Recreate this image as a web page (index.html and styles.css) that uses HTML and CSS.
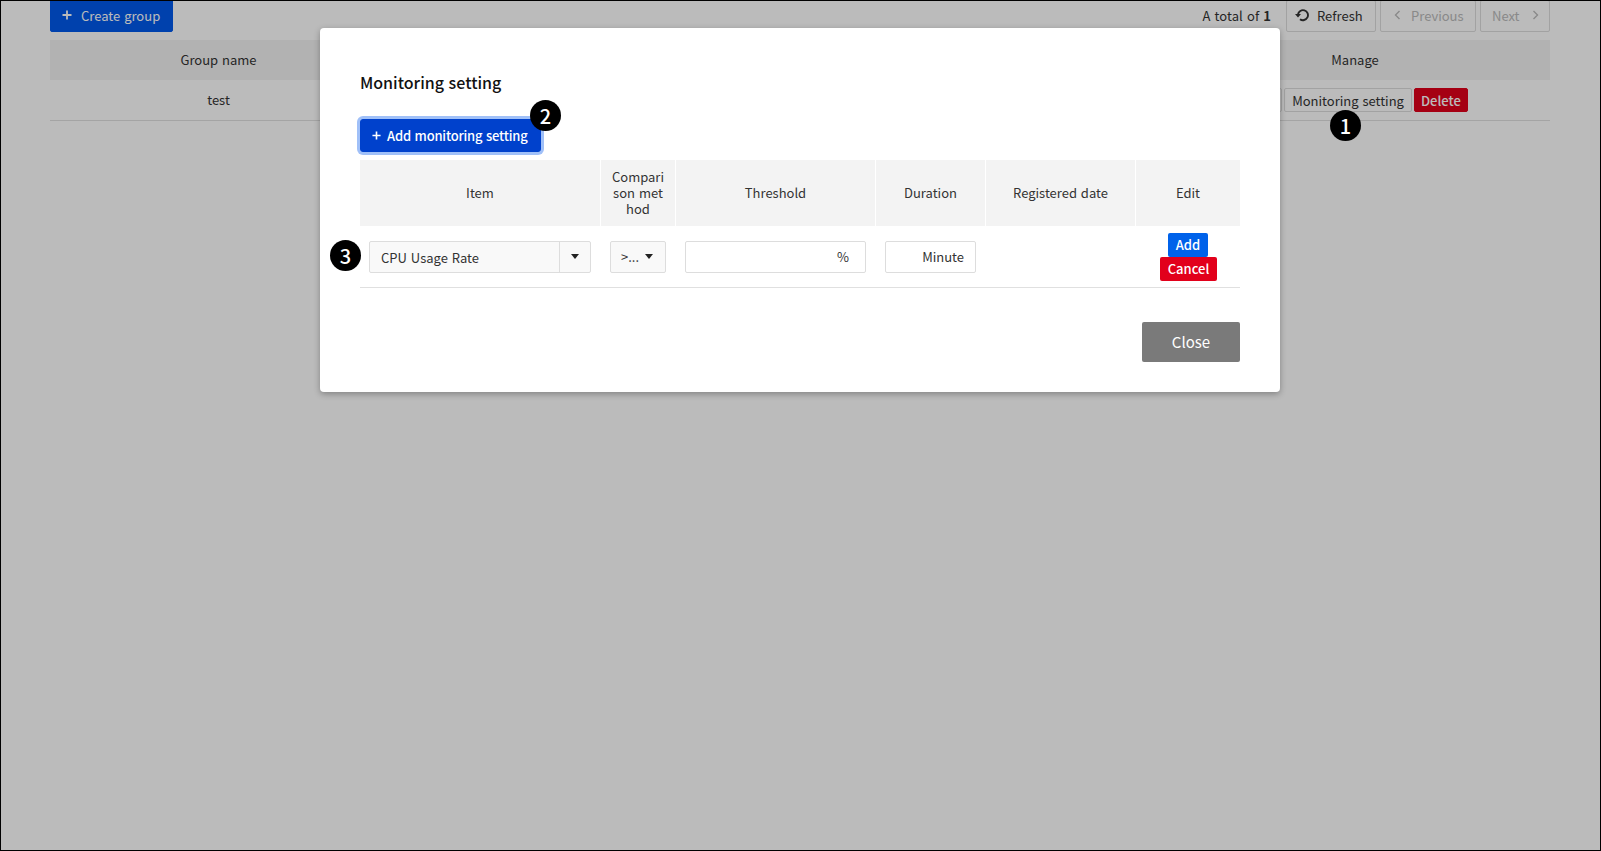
FILE: index.html

```html
<!DOCTYPE html>
<html lang="en">
<head>
  <meta charset="UTF-8" />
  <title>Monitoring setting</title>
  <link rel="stylesheet" href="styles.css">
</head>
<body>
  <div class="page">
    <div class="toolbar">
      <button class="btn btn-primary btn-create">
        <svg class="icon-plus" width="10" height="10" viewBox="0 0 10 10"><path d="M5 0.5v9M0.5 5h9" /></svg>
        <span>Create group</span>
      </button>
      <div class="toolbar-right">
        <span class="total">A total of <b>1</b></span>
        <button class="btn btn-refresh">
          <svg width="14" height="14" viewBox="0 0 14 14" fill="none" stroke="#333" stroke-width="1.9"><path d="M3 6.5A5 5 0 1 1 5 11.2" /><path d="M0 6h6l-3 3.6z" fill="#333" stroke="none" /></svg>
          <span>Refresh</span>
        </button>
        <button class="btn btn-disabled btn-prev">
          <svg width="7" height="10" viewBox="0 0 7 10" fill="none" stroke="#bbb" stroke-width="1.4"><path d="M5.5 1L1.5 5l4 4" /></svg>
          <span>Previous</span>
        </button>
        <button class="btn btn-disabled btn-next">
          <span>Next</span>
          <svg width="7" height="10" viewBox="0 0 7 10" fill="none" stroke="#bbb" stroke-width="1.4"><path d="M1.5 1l4 4-4 4" /></svg>
        </button>
      </div>
    </div>

    <div class="list-head">
      <div class="col-name">Group name</div>
      <div class="col-manage">Manage</div>
    </div>
    <div class="list-row">
      <div class="col-name">test</div>
      <div class="col-manage manage-btns">
        <button class="btn-small">Edit</button>
        <button class="btn-small">Monitoring setting</button>
        <button class="btn-small btn-delete">Delete</button>
      </div>
    </div>
  </div>

  <div class="overlay"></div>
  <span class="badge badge-1">1</span>

  <div class="modal">
    <h2>Monitoring setting</h2>
    <button class="btn btn-primary btn-add">
      <svg class="icon-plus" width="9" height="9" viewBox="0 0 10 10"><path d="M5 0.5v9M0.5 5h9" /></svg>
      <span>Add monitoring setting</span>
    </button>
    <span class="badge badge-2">2</span>
    <span class="badge badge-3">3</span>

    <div class="grid-head">
      <div>Item</div>
      <div>Compari<br>son met<br>hod</div>
      <div>Threshold</div>
      <div>Duration</div>
      <div>Registered date</div>
      <div>Edit</div>
    </div>
    <div class="grid-row">
      <div class="cell">
        <div class="select select-item">
          <span class="select-text">CPU Usage Rate</span>
          <span class="select-arrow"><i class="caret"></i></span>
        </div>
      </div>
      <div class="cell">
        <div class="select select-cmp"><span>&gt;...</span><i class="caret"></i></div>
      </div>
      <div class="cell">
        <div class="input input-threshold">%</div>
      </div>
      <div class="cell">
        <div class="input input-duration">Minute</div>
      </div>
      <div class="cell"></div>
      <div class="cell cell-edit">
        <button class="btn-tiny btn-blue">Add</button>
        <button class="btn-tiny btn-red">Cancel</button>
      </div>
    </div>
    <div class="modal-foot">
      <button class="btn-close">Close</button>
    </div>
  </div>
</body>
</html>
```

FILE: styles.css

```css
* {
  box-sizing: border-box;
}
body {
  margin: 0;
  height: 851px;
  overflow: hidden;
  background: #fff;
  font-family: "Noto Sans CJK KR", "Noto Sans", sans-serif;
  font-size: 13px;
  line-height: 20px;
  word-spacing: 1px;
  color: #333;
}
button {
  font-family: inherit;
  word-spacing: inherit;
  cursor: pointer;
}
.page {
  padding: 0 51px 0 50px;
  height: 851px;
}
.toolbar {
  display: flex;
  justify-content: space-between;
  height: 40px;
}
.toolbar-right {
  display: flex;
  align-items: flex-start;
  gap: 4px;
}
.total {
  line-height: 32px;
  margin-right: 11px;
  letter-spacing: 0.1px;
}
.btn {
  height: 32px;
  border: 1px solid #ddd;
  border-radius: 2px;
  background: #fff;
  font-size: 13px;
  color: #333;
  display: flex;
  align-items: center;
  padding: 0 0 2px;
}
.btn-primary {
  background: #0041cc;
  border-color: #0041cc;
  color: #fff;
}
.icon-plus path {
  stroke: #fff;
  stroke-width: 1.8;
  fill: none;
}
.btn-create {
  width: 123px;
  padding-left: 11px;
  gap: 9px;
  background: #0059ec;
  border-color: #0059ec;
  border-radius: 0 0 2px 2px;
}
.btn-refresh {
  width: 90px;
  padding-left: 8px;
  gap: 8px;
}
.btn-disabled {
  color: #bbb;
  background: #fff;
}
.btn-prev {
  width: 96px;
  padding-left: 13px;
  gap: 10px;
}
.btn-next {
  width: 70px;
  padding-left: 11px;
  gap: 12px;
}
.list-head {
  display: flex;
  justify-content: space-between;
  align-items: center;
  height: 40px;
  background: #f3f3f3;
}
.list-row {
  display: flex;
  justify-content: space-between;
  align-items: center;
  height: 41px;
  border-bottom: 1px solid #e0e0e0;
}
.col-name {
  width: 337px;
  text-align: center;
}
.col-manage {
  width: 390px;
  text-align: center;
}
.manage-btns {
  display: flex;
  justify-content: center;
  gap: 2px;
}
.btn-small {
  height: 24px;
  padding: 0 7px;
  border: 1px solid #ddd;
  border-radius: 2px;
  background: #fff;
  font-size: 13px;
  color: #333;
}
.btn-delete {
  width: 54px;
  padding: 0;
  background: #e2001b;
  border-color: #e2001b;
  color: #fff;
  font-weight: 500;
}
.overlay {
  position: absolute;
  top: 0;
  left: 0;
  width: 1601px;
  height: 851px;
  border: 1px solid #000;
  background: rgba(0, 0, 0, 0.265);
}
.modal {
  position: absolute;
  top: 28px;
  left: 320px;
  width: 960px;
  height: 364px;
  padding: 41px 40px 0;
  background: #fff;
  border-radius: 4px;
  box-shadow: 0 2px 6px rgba(0, 0, 0, 0.3);
}
.modal h2 {
  margin: 0 0 24px;
  font-size: 16px;
  font-weight: 500;
  line-height: 26px;
  color: #111;
}
.btn-add {
  width: 181px;
  height: 33px;
  padding: 0 0 0 11px;
  gap: 6px;
  border-radius: 3px;
  color: #fff;
  font-weight: 500;
  letter-spacing: -0.2px;
  box-shadow: 0 0 0 3px #a0c0f8;
}
.badge {
  position: absolute;
  width: 31px;
  height: 31px;
  border-radius: 50%;
  background: #000;
  color: #fff;
  font-size: 20px;
  font-weight: 500;
  line-height: 31px;
  text-align: center;
}
.badge-1 {
  left: 1330px;
  top: 110px;
}
.badge-2 {
  left: 210px;
  top: 72px;
}
.badge-3 {
  left: 10px;
  top: 212px;
}
.grid-head,
.grid-row {
  display: grid;
  grid-template-columns: 240px 74px 199px 109px 149px 104px;
  column-gap: 1px;
}
.grid-head {
  margin-top: 8px;
  height: 66px;
}
.grid-head div {
  display: flex;
  align-items: center;
  justify-content: center;
  background: #f3f3f3;
  text-align: center;
  line-height: 16px;
}
.grid-row {
  height: 62px;
  border-bottom: 1px solid #e0e0e0;
}
.cell {
  display: flex;
  align-items: center;
  justify-content: center;
}
.select {
  height: 32px;
  border: 1px solid #ddd;
  border-radius: 2px;
  background: #f9f9f9;
  display: flex;
  align-items: center;
}
.select-item {
  width: 222px;
}
.select-text {
  flex: 1;
  padding: 2px 0 0 11px;
}
.select-arrow {
  width: 31px;
  height: 30px;
  border-left: 1px solid #ddd;
  display: flex;
  align-items: center;
  justify-content: center;
}
.caret {
  width: 0;
  height: 0;
  border-left: 4px solid transparent;
  border-right: 4px solid transparent;
  border-top: 5px solid #222;
}
.select-cmp {
  width: 56px;
  padding-left: 10px;
  gap: 6px;
}
.input {
  height: 32px;
  border: 1px solid #ddd;
  border-radius: 2px;
  background: #fff;
  line-height: 30px;
  text-align: right;
}
.input-threshold {
  width: 181px;
  padding-right: 16px;
}
.input-duration {
  width: 91px;
  padding-right: 11px;
}
.cell-edit {
  flex-direction: column;
}
.btn-tiny {
  height: 24px;
  padding: 0 8px;
  border: 0;
  border-radius: 2px;
  font-size: 13px;
  font-weight: 500;
  color: #fff;
}
.btn-blue {
  background: #0062ea;
}
.btn-red {
  width: 57px;
  padding: 0;
  margin-left: 1px;
  background: #e2001b;
}
.modal-foot {
  display: flex;
  justify-content: flex-end;
  margin-top: 34px;
}
.btn-close {
  width: 98px;
  height: 40px;
  padding-bottom: 2px;
  border: 0;
  border-radius: 2px;
  background: #7a7a7a;
  color: #fff;
  font-size: 15px;
}
```
